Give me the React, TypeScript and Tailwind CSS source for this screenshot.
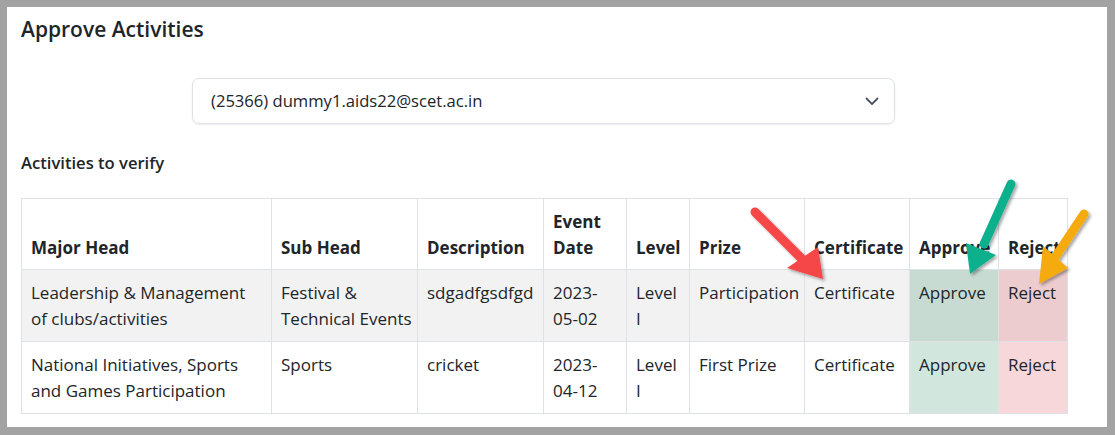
import React from "react";

const rows = [
  {
    major: ["Leadership & Management", "of clubs/activities"],
    sub: ["Festival &", "Technical Events"],
    desc: "sdgadfgsdfgd",
    date: ["2023-", "05-02"],
    prize: "Participation",
    striped: true,
  },
  {
    major: ["National Initiatives, Sports", "and Games Participation"],
    sub: ["Sports"],
    desc: "cricket",
    date: ["2023-", "04-12"],
    prize: "First Prize",
    striped: false,
  },
];

const th = "border border-[#dee2e6] px-[9px] pt-[8px] pb-[8px] align-bottom text-left font-bold whitespace-nowrap";
const td = "border border-[#dee2e6] px-[9px] pt-[10px] pb-[7px] align-top font-normal whitespace-nowrap";

function Lines({ items }: { items: string[] }) {
  return (
    <>
      {items.map((t, i) => (
        <div key={i}>{t}</div>
      ))}
    </>
  );
}

function Arrows() {
  // annotation arrows drawn over the table
  return (
    <svg className="pointer-events-none absolute left-0 top-0" width="1115" height="435">
      <defs>
        <filter id="sh" x="-20%" y="-20%" width="140%" height="140%">
          <feDropShadow dx="2" dy="2" stdDeviation="1.5" floodColor="#000" floodOpacity="0.35" />
        </filter>
      </defs>
      <g filter="url(#sh)">
        <line x1="755" y1="212" x2="802" y2="259" stroke="#f54747" strokeWidth="9" strokeLinecap="round" />
        <polygon points="787,268 818,247 823,279" fill="#f54747" />
        <line x1="1011" y1="184" x2="984" y2="244" stroke="#11b08d" strokeWidth="9" strokeLinecap="round" />
        <polygon points="966,243 996,255 970,274" fill="#11b08d" />
        <line x1="1084" y1="214" x2="1056" y2="256" stroke="#f5aa0c" strokeWidth="9" strokeLinecap="round" />
        <polygon points="1043,246 1068,268 1039,284" fill="#f5aa0c" />
      </g>
    </svg>
  );
}

export default function App() {
  return (
    <div
      className="relative h-[435px] w-[1115px] bg-[#a3a3a3] pb-[8px] pl-[7px] pr-[8px] pt-[7px] text-[#212529]"
      style={{ fontFamily: '"Open Sans", "Noto Sans", Arial, sans-serif' }}
    >
      <div className="h-full w-full bg-white px-[14px]">
        <h4 className="pt-[9px] text-[21px] font-semibold leading-[26px]">Approve Activities</h4>

        <div className="ml-[171px] mt-[36px] flex h-[46px] w-[703px] items-center justify-between rounded-[7px] border border-[#dee2e6] pl-[18px] pr-[15px] text-[16.6px] shadow-[0_1px_2px_rgba(0,0,0,0.08)]">
          <span>(25366) dummy1.aids22@scet.ac.in</span>
          <svg width="14" height="9" viewBox="0 0 14 9" fill="none">
            <path d="M1.5 1.5 L7 7 L12.5 1.5" stroke="#4b5563" strokeWidth="1.8" strokeLinecap="round" strokeLinejoin="round" />
          </svg>
        </div>

        <h6 className="mt-[27px] text-[16.6px] font-semibold leading-[24px]">Activities to verify</h6>

        <table className="mt-[23px] w-[1046px] table-fixed border-collapse text-[17px] leading-[26px]">
          <colgroup>
            <col className="w-[250px]" />
            <col className="w-[146px]" />
            <col className="w-[126px]" />
            <col className="w-[83px]" />
            <col className="w-[63px]" />
            <col className="w-[115px]" />
            <col className="w-[105px]" />
            <col className="w-[89px]" />
            <col className="w-[69px]" />
          </colgroup>
          <thead>
            <tr className="h-[71px]">
              <th className={th}>Major Head</th>
              <th className={th}>Sub Head</th>
              <th className={th}>Description</th>
              <th className={th}>
                <Lines items={["Event", "Date"]} />
              </th>
              <th className={th}>Level</th>
              <th className={th}>Prize</th>
              <th className={th}>Certificate</th>
              <th className={th}>Approve</th>
              <th className={th}>Reject</th>
            </tr>
          </thead>
          <tbody>
            {rows.map((r) => (
              <tr key={r.desc} className={`h-[72px] ${r.striped ? "bg-[#f2f2f2]" : "bg-white"}`}>
                <td className={td}>
                  <Lines items={r.major} />
                </td>
                <td className={td}>
                  <Lines items={r.sub} />
                </td>
                <td className={td}>{r.desc}</td>
                <td className={td}>
                  <Lines items={r.date} />
                </td>
                <td className={td}>
                  <Lines items={["Level", "I"]} />
                </td>
                <td className={td}>{r.prize}</td>
                <td className={td}>Certificate</td>
                <td className={`${td} ${r.striped ? "bg-[#c7dbd2]" : "bg-[#d1e7dd]"}`}>Approve</td>
                <td className={`${td} ${r.striped ? "bg-[#eccccf]" : "bg-[#f8d7da]"}`}>Reject</td>
              </tr>
            ))}
          </tbody>
        </table>
      </div>
      <Arrows />
    </div>
  );
}
